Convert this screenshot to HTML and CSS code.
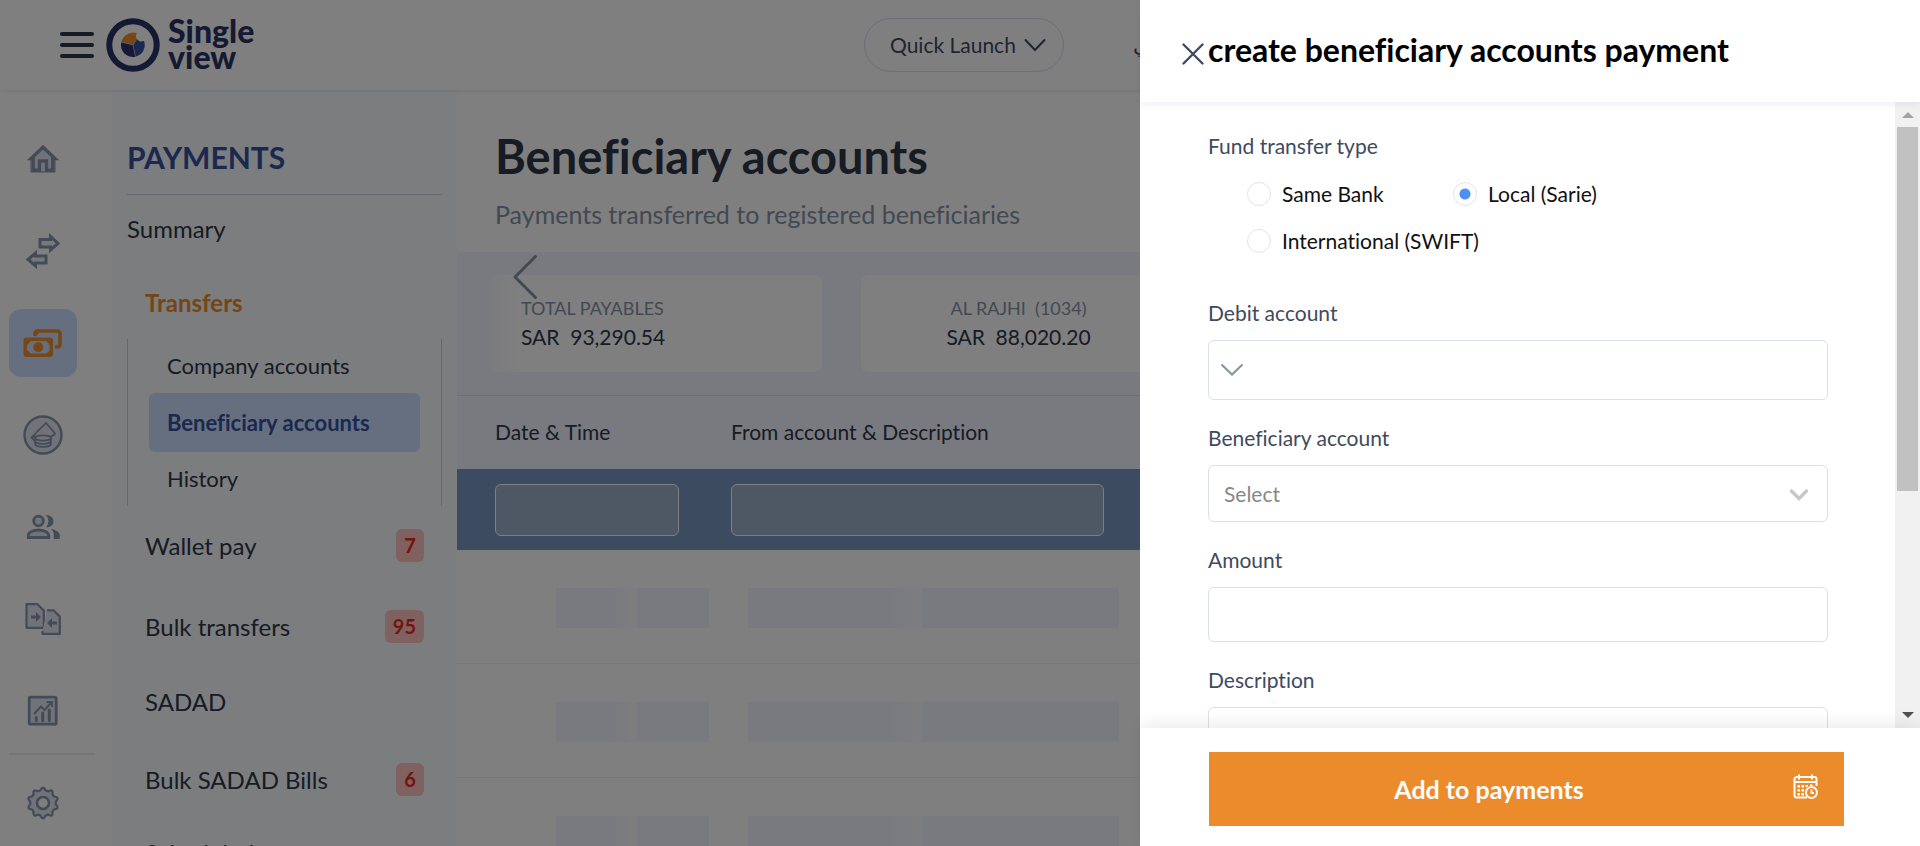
FILE: index.html
```html
<!DOCTYPE html>
<html lang="en">
<head>
<meta charset="utf-8">
<title>Beneficiary accounts</title>
<link rel="stylesheet" href="styles.css">
</head>
<body>
<div class="app">
  <header class="topbar">
    <div class="brand">
      <button class="menu-btn" type="button" aria-label="Menu"><span></span><span></span><span></span></button>
      <a class="logo" href="#">
        <svg width="54" height="54" viewBox="0 0 54 54" aria-hidden="true">
          <circle cx="27" cy="27" r="23.7" fill="#fff" stroke="#2d3366" stroke-width="6"/>
          <path d="M27 27 15.4 24A12 12 0 0 1 31 15.300 A5 5 0 0 0 31 21Z" fill="#f08e2c"/>
          <path d="M27 27 31 21A5 5 0 0 0 38 22.800A12 12 0 0 1 29.500 38.700Z" fill="#3650a0"/>
          <path d="M27 27 29.500 38.700A12 12 0 0 1 15.200 24.300Z" fill="#2d3366"/>
          <path d="M15.200 24 27 27 29.500 38.700M27 27l4-6" stroke="#b0b4c8" stroke-width=".7" fill="none"/>
        </svg>
        <span class="logo-text">Single<br>view</span>
      </a>
    </div>
    <nav class="top-actions">
      <button class="quick" type="button">Quick Launch
        <svg width="22" height="14" viewBox="0 0 22 14" aria-hidden="true"><path d="M1.500 2 11 12 20.500 2"/></svg>
      </button>
      <a class="lang" href="#" lang="ar">عربي</a>
    </nav>
  </header>

  <div class="layout">
    <nav class="rail" aria-label="Modules">
      <a href="#" aria-label="Home"><svg width="34" height="30" viewBox="0 0 34 30"><path class="soft" d="M17 3 5 14v14h24V14z"/><path d="M17 3.200 5 14.500h2.200v11.800h6.300v-9.300h7v9.300h6.300V14.500H29z" fill="none" stroke-width="3.400"/></svg></a>
      <a href="#" aria-label="Exchange"><svg width="34" height="36" viewBox="0 0 34 36"><path class="soft" d="M14 6.500h10.500V3.500L32 10.500l-7.500 6.500v-3H14zM20 23H9.500v-3L2 26.500 9.500 33v-3H20z" stroke-width="3" fill-opacity=".5"/></svg></a>
      <a href="#" class="active" aria-label="Payments"><svg width="40" height="30" viewBox="0 0 40 30"><path d="M12 8V5.500A2.500 2.500 0 0 1 14.500 3H34.500A2.500 2.500 0 0 1 37 5.500V16.500A2.500 2.500 0 0 1 34.500 19H32" fill="none" stroke-width="3.600"/><path d="M14 4.500h2.500L12 9zM33 3l4 4V3zM37 14l-4 5h4z" stroke="none"/><rect x="2.300" y="11.300" width="26" height="16" rx="1.500" fill="none" stroke-width="3.600"/><path d="M3 12h6l-6 6zM28 12h-6l6 6zM3 27h6l-6-6zM28 27h-6l6-6z" stroke="none"/><circle cx="15.300" cy="19.300" r="5" stroke="none"/></svg></a>
      <a href="#" aria-label="Finance"><svg width="40" height="40" viewBox="0 0 40 40"><circle class="soft" cx="20" cy="20" r="18.500" stroke-width="2.400"/><path d="M12 26.500 8.500 22.500 23 8l9 10.500-5.500 5M12 21l-3.500 2M27 22l5-2.500" fill="none" stroke-width="1.700"/><ellipse class="soft" cx="20" cy="23" rx="8" ry="2.600" stroke-width="1.700"/><path d="M12 23v6c0 1.600 3.600 2.800 8 2.800s8-1.200 8-2.800v-6M12 26c0 1.600 3.600 2.800 8 2.800s8-1.200 8-2.800" fill="none" stroke-width="1.700"/></svg></a>
      <a href="#" aria-label="People"><svg width="34" height="26" viewBox="0 0 34 26"><circle class="soft" cx="12.500" cy="7" r="4.800" stroke-width="2.800"/><path class="soft" d="M2.300 23.500v-2c0-3.500 5-5.500 10.200-5.500s10.200 2 10.200 5.500v2z" stroke-width="2.800"/><path d="M20 1c4 0 7.500 2.300 7.500 6.200S24 13.300 20 13.300c3.200-4 3.200-8.300 0-12.300zM25 15c4.500.6 8.800 3 8.800 6.500V25h-6v-3.500c0-3-1-4.800-2.800-6.500z" stroke="none"/></svg></a>
      <a href="#" aria-label="Files"><svg width="38" height="34" viewBox="0 0 38 34"><path class="soft" d="M2.500 2.200h11l6.300 6.300v17.300H2.500z" stroke-width="2.200" stroke-linejoin="round"/><path d="M23 8.300h6.500l6.300 6.300v17.300H18.500v-3" class="soft" stroke-width="2.200" stroke-linejoin="round"/><path d="M7 13.500h5v-3.500l5 5-5 5v-3.500H7zM33 19.500h-5V16l-5 5 5 5v-3.500h5z" stroke="none"/></svg></a>
      <a href="#" aria-label="Reports"><svg width="32" height="32" viewBox="0 0 32 32"><rect class="soft" x="2.200" y="2.200" width="27" height="27" rx="1.500" stroke-width="2.800"/><path d="M7 19 14 11.500l3.500 3.500L24 8M19.500 7h5.500v5" fill="none" stroke-width="2"/><path d="M9.300 22.500v3M15.700 18v7.500M22.300 15v10.500" fill="none" stroke-width="3" stroke-linecap="round"/></svg></a>
      <hr>
      <a href="#" aria-label="Settings"><svg width="34" height="34" viewBox="-17 -17 34 34"><path class="soft" d="M-2.500-12.700Q0-18 2.500-12.700Q3.800-11.800 5.400-11.700Q10.500-14.600 9.500-8.800Q10-7.300 11.300-6.400Q17-5.700 12.900-1.500Q12.500 0 12.900 1.500Q17 5.700 11.300 6.400Q10 7.300 9.500 8.800Q10.500 14.600 5.400 11.700Q3.800 11.800 2.500 12.700Q0 18-2.500 12.700Q-3.800 11.800-5.400 11.700Q-10.500 14.600-9.500 8.800Q-10 7.300-11.300 6.400Q-17 5.700-12.900 1.500Q-12.500 0-12.900-1.500Q-17-5.700-11.300-6.400Q-10-7.300-9.500-8.800Q-10.500-14.600-5.400-11.700Q-3.800-11.800-2.500-12.700Z" stroke-width="2.300"/><circle r="6" fill="#fff" stroke-width="2.600"/></svg></a>
    </nav>

    <aside class="panel">
      <h2>PAYMENTS</h2>
      <a class="summary" href="#">Summary</a>
      <a class="section" href="#">Transfers</a>
      <div class="group">
        <a href="#">Company accounts</a>
        <a class="current" href="#">Beneficiary accounts</a>
        <a href="#">History</a>
      </div>
      <div class="links">
        <a href="#">Wallet pay <span class="badge">7</span></a>
        <a href="#">Bulk transfers <span class="badge">95</span></a>
        <a href="#">SADAD</a>
        <a href="#">Bulk SADAD Bills <span class="badge">6</span></a>
        <a href="#">Scheduled</a>
      </div>
    </aside>

    <main class="main">
      <h1>Beneficiary accounts</h1>
      <p class="sub">Payments transferred to registered beneficiaries</p>
      <section class="balances">
        <div class="card"><span class="name">TOTAL PAYABLES</span><span class="sum">SAR&nbsp; 93,290.54</span></div>
        <div class="card centered"><span class="name">AL RAJHI&nbsp; (1034)</span><span class="sum">SAR&nbsp; 88,020.20</span></div>
        <button class="prev" type="button" aria-label="Previous"><svg width="26" height="46" viewBox="0 0 26 46"><path d="M23.500 2.500 3 23l20.500 20.500"/></svg></button>
      </section>
      <table>
        <colgroup><col class="c-date"><col class="c-from"><col></colgroup>
        <thead>
          <tr><th>Date &amp; Time</th><th>From account &amp; Description</th><th></th></tr>
          <tr class="filters"><td><input type="text" aria-label="Date &amp; Time"></td><td><input type="text" aria-label="From account &amp; Description"></td><td></td></tr>
        </thead>
        <tbody>
          <tr><td><div class="bone small"></div></td><td><div class="bone"></div></td><td></td></tr>
          <tr><td><div class="bone small"></div></td><td><div class="bone"></div></td><td></td></tr>
          <tr><td><div class="bone small"></div></td><td><div class="bone"></div></td><td></td></tr>
        </tbody>
      </table>
    </main>
  </div>
</div>

<div class="backdrop"></div>

<section class="drawer" role="dialog" aria-labelledby="drawer-title">
  <header class="drawer-head">
    <button class="close" type="button" aria-label="Close"><svg width="24" height="24" viewBox="0 0 24 24"><path d="M2.500 2.500l19 19M21.500 2.500l-19 19"/></svg></button>
    <h2 id="drawer-title">create beneficiary accounts payment</h2>
  </header>
  <div class="drawer-body">
    <form class="form" id="payment">
      <fieldset>
        <legend>Fund transfer type</legend>
        <div class="radios">
          <label><input type="radio" name="type">Same Bank</label>
          <label><input type="radio" name="type" checked>Local (Sarie)</label>
          <label><input type="radio" name="type">International (SWIFT)</label>
        </div>
      </fieldset>
      <div class="field">
        <label for="debit">Debit account</label>
        <div class="select tall"><select id="debit"><option></option></select>
          <svg class="chev-left" width="24" height="14" viewBox="0 0 24 14" aria-hidden="true"><path d="M2 2l10 9.500L22 2"/></svg></div>
      </div>
      <div class="field">
        <label for="beneficiary">Beneficiary account</label>
        <div class="select"><select id="beneficiary"><option>Select</option></select>
          <svg class="chev-right" width="20" height="14" viewBox="0 0 20 14" aria-hidden="true"><path d="M2.500 3 10 10.500 17.500 3"/></svg></div>
      </div>
      <div class="field">
        <label for="amount">Amount</label>
        <input id="amount" type="text">
      </div>
      <div class="field">
        <label for="description">Description</label>
        <input id="description" type="text">
      </div>
    </form>
    <div class="scrollbar" aria-hidden="true"><i class="up"></i><i class="thumb"></i><i class="down"></i></div>
  </div>
  <footer class="drawer-foot">
    <button class="submit" type="submit" form="payment"><span>Add to payments</span>
      <svg width="26" height="26" viewBox="0 0 26 26" aria-hidden="true"><g fill="none" stroke="#fff" stroke-width="2"><path d="M14 23.500H3.500A2 2 0 0 1 1.500 21.500V5A2 2 0 0 1 3.500 3H21.500A2 2 0 0 1 23.500 5V12M1.500 8H23.500M6 0.500V5.500M19 0.500V5.500"/><circle cx="18.500" cy="18.500" r="5.500"/><path d="M18.500 15.500V19H21" stroke-width="1.800"/></g><path d="M4.500 11h2.500v2.500H4.500zM8.500 11H11v2.500H8.500zM12.500 11H15v1.500l-2.500 1zM17 10.500h2.500V12H17zM4.500 15h2.500v2.500H4.500zM8.500 15H11v2.500H8.500zM4.500 19h2.500v2.500H4.500zM8.500 19H11v2.500H8.500z" fill="#fff"/></svg>
    </button>
  </footer>
</section>
</body>
</html>
```
FILE: styles.css
```css
* { box-sizing: border-box; }
body { margin: 0; height: 100vh; overflow: hidden; background: #fff; color: #2d3748; font-family: Lato, "Noto Sans", sans-serif; font-size: 21px; line-height: 32px; font-variant-ligatures: none; }
a { color: inherit; text-decoration: none; }
button, input, select { font: inherit; color: inherit; }
button { border: 0; padding: 0; background: none; font-variant-ligatures: none; }
h1, h2, p { margin: 0; }
svg { display: block; fill: none; }

.app { height: 100vh; display: flex; flex-direction: column; overflow: hidden; }

/* Top bar */
.topbar { flex: none; height: 90px; display: grid; grid-template-columns: 45% 1fr; align-items: center; box-shadow: 0 1px 4px rgba(0, 0, 40, .1); z-index: 1; }
.brand { display: flex; align-items: center; gap: 12px; padding-left: 60px; }
.menu-btn { width: 34px; display: grid; gap: 7px; }
.menu-btn span { height: 4px; border-radius: 2px; background: #2d3748; }
.logo { display: flex; align-items: center; gap: 8px; }
.logo-text { padding-bottom: 2px; font-size: 32px; font-weight: 900; line-height: 26px; color: #2d3366; }
.top-actions { display: flex; align-items: center; gap: 69px; }
.quick { display: flex; align-items: center; gap: 8px; width: 200px; height: 54px; padding-left: 25px; border: 1px solid #d9dcf0; border-radius: 27px; color: #404a60; }
.quick svg { stroke: #404a60; stroke-width: 2; stroke-linecap: round; }
.lang { color: #404a60; font-family: "DejaVu Sans", sans-serif; font-variant-ligatures: normal; }

.layout { flex: 1; display: flex; min-height: 0; }

/* Icon rail */
.rail { flex: none; width: 112px; padding: 35px 0 0 9px; }
.rail a { width: 68px; height: 68px; padding-right: 1px; margin-bottom: 24px; display: grid; place-items: center; border-radius: 12px; }
.rail svg { fill: #8796ad; stroke: #8796ad; }
.rail .soft { fill: #e2e6f2; }
.rail .active { background: #cddfff; }
.rail .active svg { fill: #f08e2c; stroke: #f08e2c; }
.rail hr { width: 86px; height: 2px; margin: -16px 0 14px; border: 0; background: #ececf0; }

/* Payments menu */
.panel { flex: none; width: 345px; padding: 47px 15px 0; background: #f8fbfe; overflow: hidden; font-size: 24px; }
.panel h2 { padding-bottom: 17px; border-bottom: 1px solid #cbd1dc; font-size: 30px; line-height: 40px; color: #3650a0; }
.panel a { display: flex; align-items: center; }
.panel .summary { margin-top: 18px; }
.panel .section { margin: 42px 0 20px 18px; color: #ec8b2c; font-weight: 700; }
.group { padding: 0 21px; border: 1px solid #c4d0e8; border-width: 0 1px; font-size: 22px; }
.group a { height: 54px; padding-left: 18px; border-radius: 6px; }
.group .current { height: 59px; background: #cddfff; color: #3650a0; font-weight: 700; }
.links { padding: 24px 18px 0; }
.links a { height: 33px; padding-bottom: 2px; justify-content: space-between; margin-bottom: 45px; }
.links a:first-child { margin-bottom: 48px; }
.links a:nth-child(2) { margin-bottom: 42px; }
.links a:nth-child(4) { margin-bottom: 40px; }
.badge { padding: 0 8px; border-radius: 6px; min-width: 28px; text-align: center; background: #ffc3c0; color: #e8281e; font-size: 20px; font-weight: 700; line-height: 33px; }

/* Main content */
.main { flex: 1; min-width: 0; }
h1 { padding: 38px 38px 0; font-size: 47px; line-height: 56px; }
.sub { padding: 18px 38px 25px; font-size: 25px; line-height: 25px; color: #8492a6; }
.balances { position: relative; display: flex; gap: 39px; height: 143px; padding: 23px 34px; background: #f2f4ff; }
.card { flex: none; width: 331px; padding: 18px 30px; border-radius: 8px; background: #fff; display: flex; flex-direction: column; }
.card:first-child { background: linear-gradient(90deg, #f7f8ff, #fff 30px); }
.card.centered { padding: 18px 46px 18px 30px; align-items: center; }
.card .name { color: #8492a6; font-size: 18px; line-height: 30px; }
.card .sum { line-height: 28px; }
.prev { position: absolute; left: 55px; top: 2px; }
.prev path { stroke: #8492a6; stroke-width: 3; stroke-linecap: round; stroke-linejoin: round; }
table { width: 100%; table-layout: fixed; border-collapse: separate; border-spacing: 0; }
.c-date { width: 274px; }
.c-from { width: 425px; }
th { height: 74px; padding: 0 0 2px; border-top: 1px solid #dcdce8; background: #f2f4ff; text-align: left; font-weight: 400; }
td { padding: 0; }
th:first-child, .filters td:first-child { padding-left: 38px; }
.filters td { height: 81px; background: #7896be; }
.filters input { display: block; width: 373px; height: 52px; border: 1px solid #fff; border-radius: 6px; background: #9ab0c8; }
.filters td:first-child input { width: 184px; }
tbody td { height: 114px; padding-top: 38px; border-bottom: 1px solid #f0f0f5; vertical-align: top; }
.bone { width: 371px; height: 40px; margin-left: 17px; background: linear-gradient(90deg, #f2f4ff 38%, #fafaff 45%, #fafaff 47%, #f2f4ff 47%); }
.bone.small { width: 153px; margin-left: 99px; background: linear-gradient(90deg, #f2f4ff 36%, #fafaff 50%, #fafaff 53%, #f2f4ff 53%); }

.backdrop { position: fixed; inset: 0; z-index: 2; background: rgba(0, 0, 0, .5); }

/* Drawer */
.drawer { position: fixed; top: 0; right: 0; bottom: 0; z-index: 3; width: 40.625vw; display: flex; flex-direction: column; background: #fff; }
.drawer-head { flex: none; height: 102px; display: flex; align-items: center; gap: 3px; padding-left: 41px; z-index: 1; box-shadow: 0 2px 8px rgba(40, 50, 120, .08); }
.drawer-head .close { padding-top: 6px; }
.close path { stroke: #404a60; stroke-width: 2.4; stroke-linecap: round; }
.drawer-head h2 { padding-bottom: 2px; color: #000; font-size: 32px; line-height: 40px; }
.drawer-body { flex: 1; min-height: 0; display: flex; }
.form { flex: 1; overflow: hidden; padding: 28px 67px 0 68px; color: #404a60; }
fieldset { margin: 0 0 40px; padding: 0; border: 0; }
legend { padding: 0; }
.radios { display: grid; grid-template-columns: 206px 1fr; row-gap: 15px; padding: 16px 0 0 39px; color: #111; }
.radios label { display: flex; align-items: center; gap: 11px; white-space: nowrap; }
.radios label:last-child { grid-column: 1 / -1; }
input[type="radio"] { appearance: none; flex: none; width: 24px; height: 24px; margin: 0; border: 1px solid #dfe3ec; border-radius: 50%; background: #fff; }
input[type="radio"]:checked { background: radial-gradient(circle, #4f8ff7 5px, #fff 6px); }
.field { margin-bottom: 22px; }
.field > label { display: block; margin-bottom: 11px; }
.field select, .field input { display: block; width: 100%; height: 55px; padding: 0 15px; border: 1px solid #dbdfe9; border-radius: 6px; background: #fff; color: #888; }
.select { position: relative; }
.field select { height: 57px; appearance: none; }
.select.tall select { height: 60px; }
.chev-left { position: absolute; left: 12px; top: 23px; stroke: #8492a6; stroke-width: 2; stroke-linecap: round; }
.chev-right { position: absolute; right: 19px; top: 23px; stroke: #c8c8c8; stroke-width: 3.5; stroke-linecap: round; }
.scrollbar { flex: none; width: 25px; padding: 10px 2px; display: flex; flex-direction: column; align-items: center; background: #f1f1f1; }
.scrollbar .up { border: 6px solid transparent; border-top: 0; border-bottom-color: #a3a3a3; margin-bottom: 9px; }
.scrollbar .thumb { width: 21px; height: 60%; background: #c1c1c1; }
.scrollbar .down { border: 6px solid transparent; border-bottom: 0; border-top-color: #505050; margin-top: auto; }
.drawer-foot { flex: none; padding: 24px 76px 20px 69px; background: #fff; z-index: 1; box-shadow: 0 -4px 16px rgba(0, 0, 0, .08); }
.submit { width: 100%; height: 74px; padding: 0 25px 0 0; display: flex; align-items: center; background: #ec8b2c; color: #fff; font-size: 25px; font-weight: 700; }
.submit span { flex: 1; padding-right: 24px; }
.submit svg { margin-bottom: 4px; }
```
